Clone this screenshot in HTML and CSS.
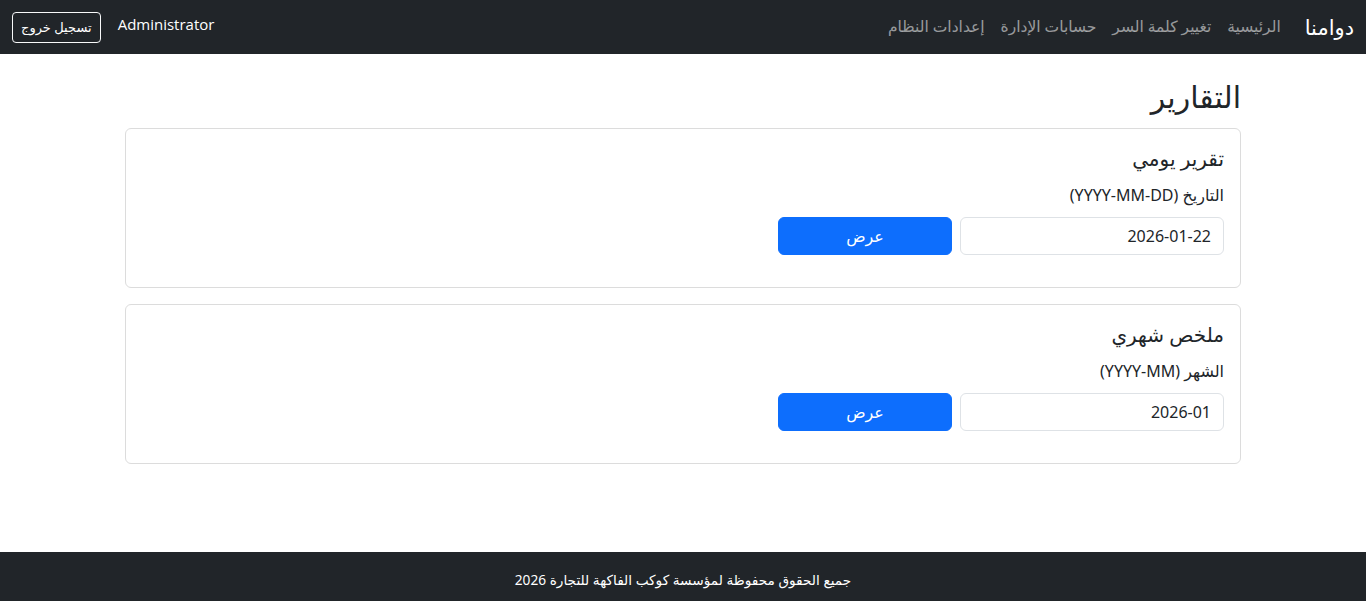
FILE: index.html
```html
<!DOCTYPE html>
<html lang="ar" dir="rtl">
<head>
	<meta charset="utf-8">
	<title>التقارير - دوامنا</title>
	<link rel="stylesheet" href="styles.css">
</head>
<body>
<nav class="topbar">
	<a class="brand" href="#">دوامنا</a>
	<ul class="nav">
		<li><a href="#">الرئيسية</a></li>
		<li><a href="#">تغيير كلمة السر</a></li>
		<li><a href="#">حسابات الإدارة</a></li>
		<li><a href="#">إعدادات النظام</a></li>
	</ul>
	<div class="user">
		<span class="user-name">Administrator</span>
		<button class="btn-logout" type="button">تسجيل خروج</button>
	</div>
</nav>

<main class="page">
	<h2>التقارير</h2>

	<section class="card">
		<h5>تقرير يومي</h5>
		<form class="report">
			<label for="day">التاريخ (YYYY-MM-DD)</label>
			<div class="row">
				<input type="text" id="day" name="day" value="2026-01-22" class="field">
				<button type="submit" class="btn-show">عرض</button>
			</div>
		</form>
	</section>

	<section class="card">
		<h5>ملخص شهري</h5>
		<form class="report">
			<label for="month">الشهر (YYYY-MM)</label>
			<div class="row">
				<input type="text" id="month" name="month" value="2026-01" class="field">
				<button type="submit" class="btn-show">عرض</button>
			</div>
		</form>
	</section>
</main>

<footer class="foot">
	<p>جميع الحقوق محفوظة لمؤسسة كوكب الفاكهة للتجارة 2026</p>
</footer>
</body>
</html>
```

FILE: styles.css
```css
*{
	box-sizing: border-box;
}
body{
	margin: 0;
	font: 16px / 1.5 "Noto Sans", "DejaVu Sans", sans-serif;
	color: #212529;
	background: #fff;
}
a{
	text-decoration: none;
}

/* top bar */
.topbar{
	display: flex;
	align-items: center;
	height: 54px;
	padding: 0 12px;
	background: #212529;
}
.brand{
	color: #fff;
	font-size: 21px;
	font-weight: 500;
	margin-left: 16px;
	line-height: 30px;
}
.nav{
	display: flex;
	list-style: none;
	margin: 0;
	padding: 0;
	font-size: 15.5px;
}
.nav a{
	display: block;
	padding: 8px;
	color: rgba(255, 255, 255, .55);
}
.nav a:hover{
	color: rgba(255, 255, 255, .75);
}
.user{
	margin-right: auto;
	display: flex;
	align-items: center;
}
.user-name{
	color: #fff;
	font-family: "Open Sans", "Noto Sans", sans-serif;
	font-size: 15px;
	margin-left: 17px;
	margin-top: -5px;
}
.btn-logout{
	font: inherit;
	font-size: 13px;
	line-height: 21px;
	color: #fff;
	background: transparent;
	border: 1px solid #f8f9fa;
	border-radius: 4px;
	padding: 4px 8px;
}

/* content */
.page{
	width: 1140px;
	margin: 0 auto;
	padding: 24px 12px 0;
}
h2{
	font-size: 30px;
	font-weight: 500;
	line-height: 38px;
	margin: 0 0 12px;
}
.card{
	border: 1px solid #dcdcdc;
	border-radius: 6px;
	padding: 17px 16px 32px;
	margin-bottom: 16px;
}
h5{
	font-size: 20px;
	font-weight: 500;
	line-height: 26px;
	margin: 0 0 12px;
}
.report label{
	display: block;
	font-size: 16px;
	line-height: 22px;
	margin-bottom: 11px;
}
.row{
	display: flex;
	gap: 8px;
}
.field{
	width: 264px;
	height: 38px;
	padding: 6px 12px;
	font: inherit;
	color: #212529;
	border: 1px solid #dee2e6;
	border-radius: 6px;
}
.btn-show{
	width: 174px;
	height: 38px;
	font: inherit;
	font-size: 16px;
	color: #fff;
	background: #0d6efd;
	border: 1px solid #0d6efd;
	border-radius: 6px;
}

/* footer */
.foot{
	margin-top: 88px;
	background: #212529;
	color: #fff;
	text-align: center;
	padding: 16px 0;
}
.foot p{
	margin: 0;
	font-size: 13.7px;
	line-height: 24px;
}
```
